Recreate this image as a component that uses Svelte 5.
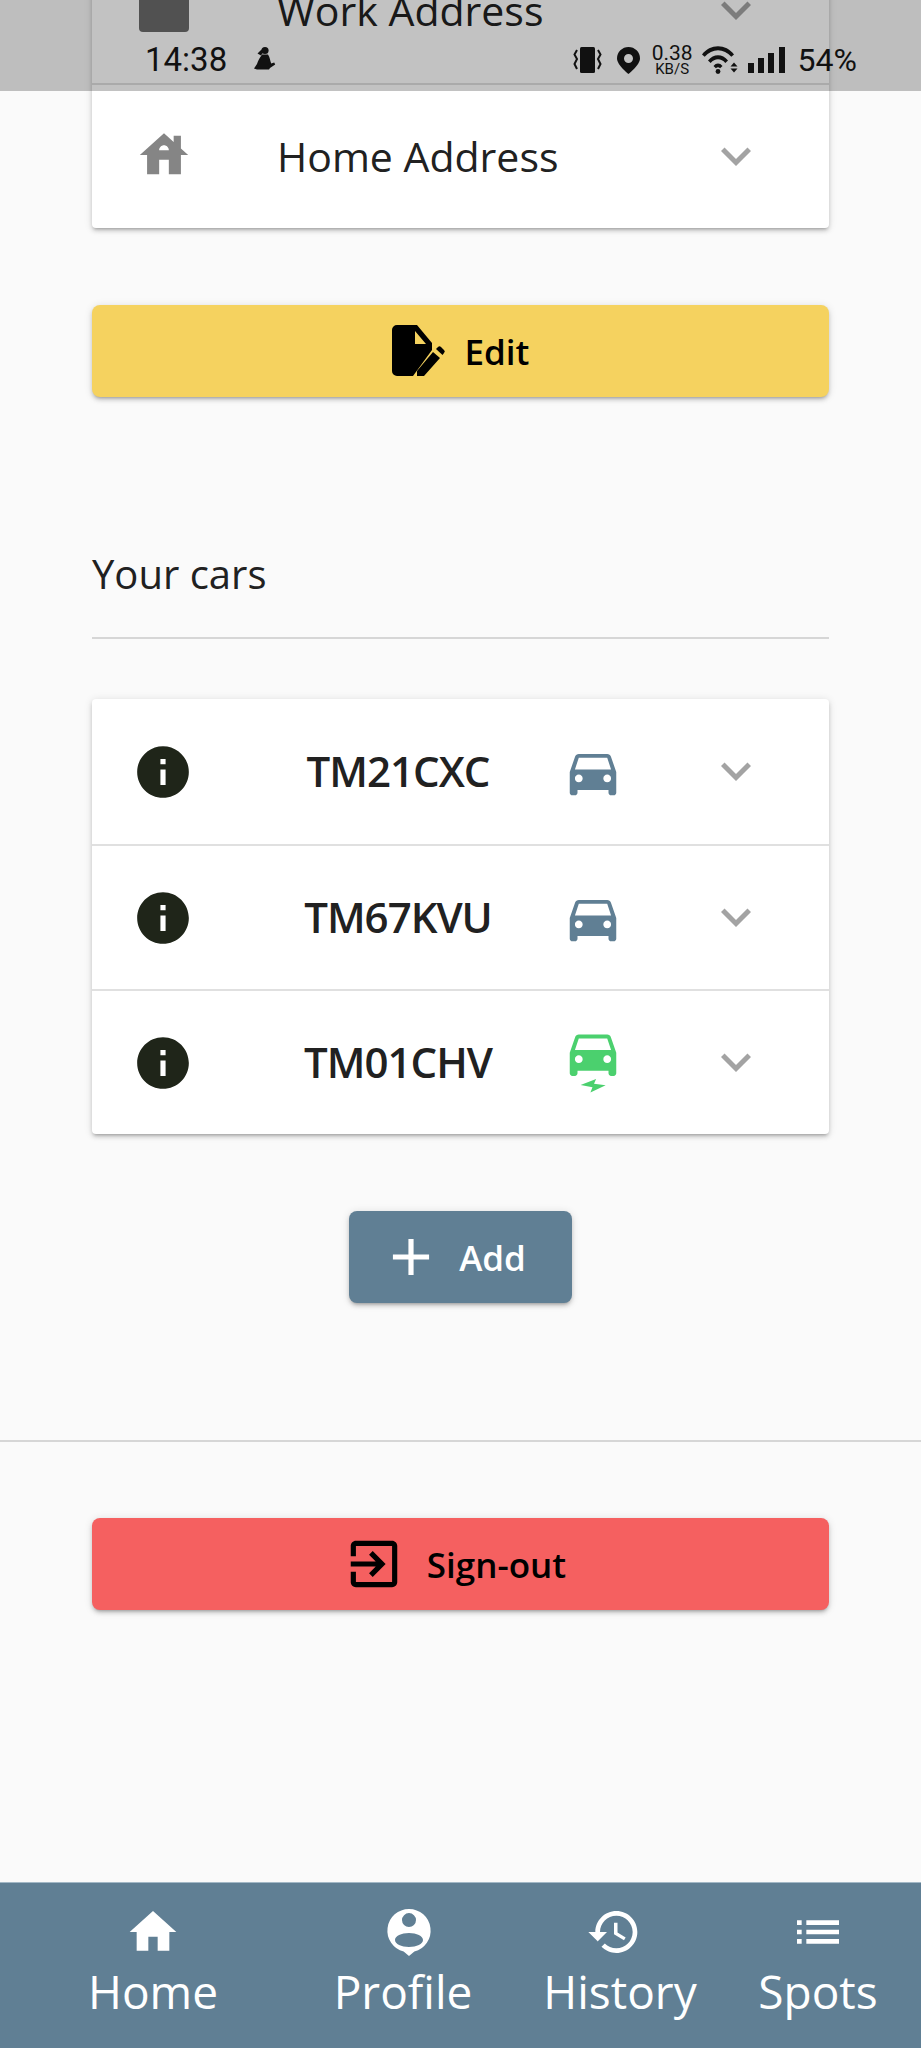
<script lang="ts">
  const icons = {
    house: 'M19 9.3V4h-3v2.6L12 3 2 12h3v8h5v-6h4v6h5v-8h3l-3-2.7zm-9 .7c0-1.1.9-2 2-2s2 .9 2 2h-4z',
    chevron: 'M16.59 8.59L12 13.17 7.41 8.59 6 10l6 6 6-6z',
    info: 'M12 2C6.48 2 2 6.48 2 12s4.48 10 10 10 10-4.48 10-10S17.52 2 12 2zm1 15h-2v-6h2v6zm0-8h-2V7h2v2z',
    car: 'M18.92 6.01C18.72 5.42 18.16 5 17.5 5h-11c-.66 0-1.21.42-1.42 1.01L3 12v8c0 .55.45 1 1 1h1c.55 0 1-.45 1-1v-1h12v1c0 .55.45 1 1 1h1c.55 0 1-.45 1-1v-8l-2.08-5.99zM6.5 16c-.83 0-1.5-.67-1.5-1.5S5.67 13 6.5 13s1.5.67 1.5 1.5S7.33 16 6.5 16zm11 0c-.83 0-1.5-.67-1.5-1.5s.67-1.5 1.5-1.5 1.5.67 1.5 1.5-.67 1.5-1.5 1.5zM5 11l1.5-4.5h11L19 11H5z',
    bolt: 'M7.2 20.5L13.2 18.2 12.4 20 16.9 20.6 11 23.4 11.8 21.4z',
    plus: 'M19 13h-6v6h-2v-6H5v-2h6V5h2v6h6v2z',
    signout: 'M10.09 15.59L11.5 17l5-5-5-5-1.41 1.41L12.67 11H3v2h9.67l-2.58 2.59zM19 3H5c-1.11 0-2 .9-2 2v4h2V5h14v14H5v-4H3v4c0 1.1.89 2 2 2h14c1.1 0 2-.9 2-2V5c0-1.1-.9-2-2-2z',
    home: 'M10 20v-6h4v6h5v-8h3L12 3 2 12h3v8z',
    profile: 'M12 2.1a9.3 9.3 0 0 1 2.300 18.300L12 22.300l-2.300-1.900A9.300 9.300 0 0 1 12 2.100zM12 3.900a3 3 0 1 0 0 6 3 3 0 0 0 0-6zM12 12.400c-3.300 0-6 1.300-6 3s2.700 3 6 3 6-1.300 6-3-2.700-3-6-3z',
    history: 'M13 3c-4.97 0-9 4.03-9 9H1l3.89 3.89.07.14L9 12H6c0-3.87 3.13-7 7-7s7 3.13 7 7-3.13 7-7 7c-1.93 0-3.68-.79-4.94-2.06l-1.42 1.42C8.27 19.99 10.51 21 13 21c4.97 0 9-4.03 9-9s-4.03-9-9-9zm-1 5v5l4.28 2.54.72-1.21-3.5-2.08V8H12z',
    list: 'M3 13h2v-2H3v2zm0 4h2v-2H3v2zm0-8h2V7H3v2zm4 4h14v-2H7v2zm0 4h14v-2H7v2zM7 7v2h14V7H7z'
  };

  const cars = [
    { plate: 'TM21CXC', color: '#607f94', ev: false },
    { plate: 'TM67KVU', color: '#607f94', ev: false },
    { plate: 'TM01CHV', color: '#4bd06e', ev: true }
  ];

  const tabs = [
    { label: 'Home', icon: icons.home },
    { label: 'Profile', icon: icons.profile },
    { label: 'History', icon: icons.history },
    { label: 'Spots', icon: icons.list }
  ];
</script>

<div class="page">
  <div class="status">
    <span class="time">14:38</span>
    <svg class="runner" viewBox="0 0 24 26" width="24" height="26">
      <circle cx="13" cy="4.500" r="3.600" />
      <path d="M9.500 3.500L5.500 7.500l3.500 2 2-3z" />
      <path d="M10 8.500h6c2 3 2 6 3.200 9l3-1 1 2-5.200 3.500-1 1.500H5l-3-1 3-4.500c1-3.500 3-6.500 5-9.500z" />
    </svg>
    <span class="status__right">
      <svg class="vib" viewBox="0 0 29 26" width="29" height="26">
        <rect x="7" y="0" width="15" height="26" rx="1.500" />
        <path d="M4 3L1.500 7.500 4 12 1.500 17 4 22M25 3l2.500 4.500L25 12l2.500 5L25 22" stroke="#111" stroke-width="2" fill="none" />
      </svg>
      <svg class="pin" viewBox="0 0 23 27" width="23" height="27">
        <path d="M11.500 0A11.500 11.500 0 0 0 0 11.500C0 18 11.500 27 11.500 27S23 18 23 11.500A11.500 11.500 0 0 0 11.500 0zm0 16a4.500 4.500 0 1 1 0-9 4.500 4.500 0 0 1 0 9z" />
      </svg>
      <span class="speed"><b>0.38</b><i>KB/S</i></span>
      <svg class="wifi" viewBox="0 0 36 28" width="36" height="28">
        <path d="M0 8.500C8-2.500 24-2.500 32 8.500l-2.700 2.300C22 2 10 2 2.700 10.800zM6 14.500c5.500-7 14.500-7 20 0L23.300 17c-4-5-10.600-5-14.600 0zM11.500 20c2.700-3.300 6.300-3.300 9 0l-2.400 2.300c-1.500-1.500-2.700-1.500-4.200 0z" />
        <circle cx="16" cy="25.500" r="2.400" />
        <path d="M32 16.500l3.500 4h-7zM28.500 22.500h7l-3.500 4z" />
      </svg>
      <svg class="signal" viewBox="0 0 37 26" width="37" height="26">
        <path d="M0 16h6v10H0zM10 11h6v15h-6zM20 6h6v20h-6zM31 0h6v26h-6z" />
      </svg>
      <span class="battery">54%</span>
    </span>
  </div>

  <main class="content">
    <section class="card card--top">
      <div class="row row--address">
        <div class="work-icon"></div>
        <span class="address">Work Address</span>
        <svg class="chevron" viewBox="0 0 24 24"><path d={icons.chevron} /></svg>
      </div>
      <div class="row row--address">
        <svg class="icon house" viewBox="0 0 24 24"><path d={icons.house} /></svg>
        <span class="address">Home Address</span>
        <svg class="chevron" viewBox="0 0 24 24"><path d={icons.chevron} /></svg>
      </div>
    </section>

    <button class="btn btn--edit">
      <svg class="icon" viewBox="0 0 62 62">
        <path fill-rule="evenodd" d="M11 5H31L46 23V30L27 56H11a5 5 0 0 1-5-5V10a5 5 0 0 1 5-5zM29 11V24H40z" />
        <path d="M31 56V51L47 32l7 6L38 56zM50 29l2-2a2 2 0 0 1 3 0l3 3a2 2 0 0 1 0 3l-1.500 2z" />
      </svg>
      Edit
    </button>

    <h2 class="heading">Your cars</h2>

    <section class="card card--cars">
      {#each cars as car}
        <div class="row row--car">
          <svg class="icon info" viewBox="0 0 24 24"><path d={icons.info} /></svg>
          <span class="plate">{car.plate}</span>
          <svg class="icon car" viewBox="0 0 24 24" fill={car.color}>
            {#if car.ev}
              <path d={icons.car} transform="translate(0 -4)" />
              <path d={icons.bolt} />
            {:else}
              <path d={icons.car} />
            {/if}
          </svg>
          <svg class="chevron" viewBox="0 0 24 24"><path d={icons.chevron} /></svg>
        </div>
      {/each}
    </section>

    <button class="btn btn--add">
      <svg class="icon" viewBox="0 0 24 24"><path d={icons.plus} /></svg>
      Add
    </button>

    <hr class="rule" />

    <button class="btn btn--signout">
      <svg class="icon" viewBox="0 0 24 24"><path d={icons.signout} /></svg>
      Sign-out
    </button>
  </main>

  <nav class="tabs">
    {#each tabs as tab}
      <div class="tab">
        <svg viewBox="0 0 24 24"><path fill-rule="evenodd" d={tab.icon} /></svg>
        <span>{tab.label}</span>
      </div>
    {/each}
  </nav>
</div>

<style>
  :global(body) {
    margin: 0;
    background: #fafafa;
  }
  .page {
    position: relative;
    height: 2048px;
    display: flex;
    flex-direction: column;
    overflow: hidden;
    font-family: "Open Sans", sans-serif;
    color: #212121;
    background: #fafafa;
  }

  /* system bar lies over the scrolled page */
  .status {
    position: absolute;
    inset: 0 0 auto 0;
    height: 91px;
    z-index: 2;
    box-sizing: border-box;
    padding: 41px 64px 0 145px;
    display: flex;
    align-items: flex-start;
    background: rgba(0, 0, 0, 0.24);
    font-family: Roboto, sans-serif;
    color: #111;
  }
  .status svg {
    display: block;
    flex-shrink: 0;
    fill: #111;
  }
  .time {
    font-size: 33px;
    line-height: 38px;
  }
  .runner {
    margin: 5px 0 0 25px;
  }
  .status__right {
    margin-left: auto;
    display: flex;
    align-items: center;
    height: 38px;
  }
  .status .pin {
    margin-left: 15px;
  }
  .speed {
    margin-left: 12px;
    display: flex;
    flex-direction: column;
    align-items: center;
    line-height: 1;
  }
  .speed b {
    font-weight: 400;
    font-size: 21px;
    line-height: 17px;
  }
  .speed i {
    font-style: normal;
    font-size: 15px;
    line-height: 14px;
  }
  .status .wifi {
    margin-left: 9px;
  }
  .status .signal {
    margin-left: 10px;
  }
  .battery {
    font-size: 32px;
    margin-left: 13px;
  }

  .content {
    flex: 1;
    min-height: 0;
    padding: 0 92px;
    display: flex;
    flex-direction: column;
  }

  .card {
    background: #fff;
    border-radius: 4px;
    box-shadow: 0 3px 3px -2px rgba(0, 0, 0, 0.2), 0 3px 4px rgba(0, 0, 0, 0.14), 0 1px 8px rgba(0, 0, 0, 0.12);
    flex-shrink: 0;
  }
  .card--top {
    margin-top: -62px;
  }
  .row {
    height: 145px;
    box-sizing: border-box;
    display: flex;
    align-items: center;
    position: relative;
  }
  .row + .row {
    border-top: 2px solid #e0e0e0;
  }
  .icon {
    display: block;
    flex-shrink: 0;
    width: 62px;
    height: 62px;
  }
  .chevron {
    display: block;
    position: absolute;
    left: 614px;
    top: 50%;
    width: 60px;
    height: 60px;
    margin-top: -31px;
    fill: #a3a3a3;
  }

  .row--address {
    padding-left: 40px;
  }
  .work-icon {
    width: 50px;
    height: 50px;
    margin: 44px 1px 0 7px;
    flex-shrink: 0;
    background: #6b6b6b;
    border-radius: 4px;
    align-self: flex-start;
  }
  .house {
    width: 58px;
    height: 58px;
    margin-top: -3px;
    fill: #858585;
    transform: translateX(3px);
  }
  .address {
    margin-left: 87px;
    font-size: 41px;
    line-height: 1;
    color: #212121;
  }

  .row--car {
    padding-left: 40px;
  }
  .info {
    fill: #1f2519;
  }
  .plate {
    position: absolute;
    left: 151px;
    width: 310px;
    margin-top: -2px;
    text-align: center;
    font-size: 42px;
    font-weight: 600;
    letter-spacing: -1px;
  }
  .car {
    position: absolute;
    left: 470px;
  }

  .btn {
    display: flex;
    align-items: center;
    justify-content: center;
    border: 0;
    border-radius: 8px;
    height: 92px;
    flex-shrink: 0;
    font-family: inherit;
    font-size: 35px;
    font-weight: 600;
    color: #000;
    box-shadow: 0 3px 3px -2px rgba(0, 0, 0, 0.2), 0 3px 4px rgba(0, 0, 0, 0.14), 0 1px 8px rgba(0, 0, 0, 0.12);
    gap: 17px;
    padding: 0;
  }
  .btn .icon {
    fill: currentColor;
  }
  .btn--edit {
    margin-top: 77px;
    padding-right: 6px;
    background: #f5d25f;
  }
  .btn--add {
    align-self: center;
    width: 223px;
    margin-top: 77px;
    padding-right: 15px;
    background: #607f94;
    color: #fff;
  }
  .btn--signout {
    margin-top: 76px;
    padding-right: 12px;
    background: #f56060;
    gap: 22px;
  }

  .heading {
    margin: 151px 0 0;
    padding-bottom: 37px;
    border-bottom: 2px solid #d6d6d6;
    font-size: 40px;
    font-weight: 400;
    line-height: 52px;
  }
  .card--cars {
    margin-top: 60px;
  }
  .rule {
    border: 0;
    border-top: 2px solid #d6d6d6;
    margin: 137px -92px 0;
    flex-shrink: 0;
  }

  .tabs {
    height: 166px;
    box-sizing: border-box;
    flex-shrink: 0;
    display: grid;
    grid-template-columns: 306px 194px 240px 156px 25px;
    background: #607f94;
    border-top: 1px solid #a3b8c6;
    color: #fff;
  }
  .tab {
    display: flex;
    flex-direction: column;
    align-items: center;
    padding-top: 21px;
  }
  .tab svg {
    width: 56px;
    height: 56px;
    fill: #fff;
    display: block;
  }
  .tab:nth-child(2) svg {
    margin-left: 12px;
  }
  .tab:nth-child(3) svg {
    margin-right: 12px;
  }
  .tab span {
    font-size: 46px;
    line-height: 62px;
  }
</style>
